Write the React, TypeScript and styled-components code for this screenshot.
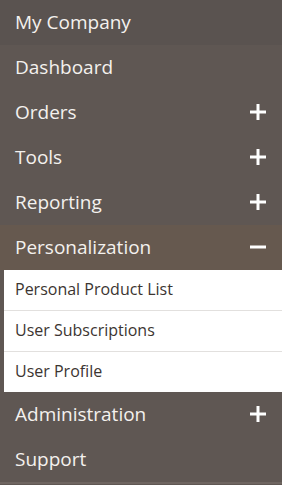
import { FC } from "react";
import styled, { createGlobalStyle } from "styled-components";

const GlobalStyle = createGlobalStyle`
  html, body {
    margin: 0;
    padding: 0;
    background: #5f5753;
  }
  * {
    box-sizing: border-box;
  }
`;

const Nav = styled.nav`
  width: 282px;
  display: flex;
  flex-direction: column;
  font-family: "Open Sans", "Noto Sans", sans-serif;
  background: #5f5753;
  border-bottom: 2px solid #6e6560;
`;

const Row = styled.div<{ bg?: string }>`
  height: 45px;
  display: flex;
  align-items: center;
  justify-content: space-between;
  padding: 0 16px 2px 15px;
  background: ${(props) => props.bg || "#5f5753"};
  color: #f4f1ee;
  font-size: 19px;
  cursor: pointer;
`;

const SubMenu = styled.ul`
  list-style: none;
  margin: 0 0 0 4px;
  padding: 0;
  background: #ffffff;
`;

const SubItem = styled.li`
  height: 41px;
  display: flex;
  align-items: center;
  padding: 0 11px 2px;
  color: #3c3531;
  font-size: 16px;
  border-bottom: 1px solid #e2e0de;
  &:last-child {
    border-bottom: none;
    height: 40px;
  }
`;

const Toggle: FC<{ open?: boolean }> = ({ open }) => (
  <svg width="16" height="16" viewBox="0 0 16 16">
    <rect x="0" y="6.5" width="16" height="3" fill="#ffffff" />
    {!open && <rect x="6.5" y="0" width="3" height="16" fill="#ffffff" />}
  </svg>
);

const items = [
  { label: "My Company", bg: "#5a5350" },
  { label: "Dashboard" },
  { label: "Orders", toggle: true },
  { label: "Tools", toggle: true },
  { label: "Reporting", toggle: true },
  { label: "Personalization", toggle: true, open: true, bg: "#66594f" },
  { label: "Administration", toggle: true },
  { label: "Support" },
];

const subItems = ["Personal Product List", "User Subscriptions", "User Profile"];

const App: FC = () => {
  return (
    <>
      <GlobalStyle />
      <Nav>
        {items.map((item) => (
          <div key={item.label}>
            <Row bg={item.bg}>
              <span>{item.label}</span>
              {item.toggle && <Toggle open={item.open} />}
            </Row>
            {item.open && (
              <SubMenu>
                {subItems.map((sub) => (
                  <SubItem key={sub}>{sub}</SubItem>
                ))}
              </SubMenu>
            )}
          </div>
        ))}
      </Nav>
    </>
  );
};

export default App;
